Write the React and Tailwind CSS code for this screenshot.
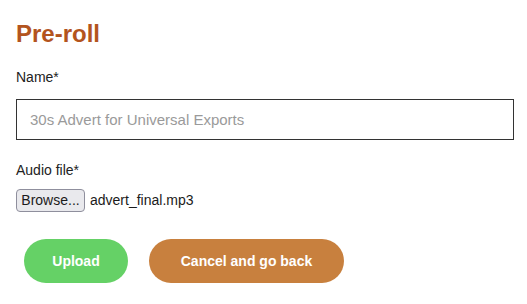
import React from "react";

export default function App() {
  return (
    <div className="w-[527px] h-[304px] bg-white px-4 font-[family-name:'Liberation_Sans',Arial,sans-serif] text-[#222] overflow-hidden">
      <h1 className="pt-5 text-[24px] leading-[28px] font-bold text-[#b3541e]">Pre-roll</h1>
      <label className="block mt-[21px] text-[14px] leading-4 text-[#222]">Name*</label>
      <input
        type="text"
        placeholder="30s Advert for Universal Exports"
        className="block mt-[14px] w-[498px] h-[41px] border border-[#333] pl-[13px] text-[15px] text-[#222] placeholder:text-[#9a9a9a] outline-none bg-white"
      />
      <label className="block mt-[22px] text-[14px] leading-4 text-[#222]">Audio file*</label>
      <div className="mt-[11px] flex items-center gap-[5px]">
        <span className="h-[23px] w-[69px] flex items-center justify-center rounded-[4px] border border-[#8f8f9d] bg-[#e9e9ed] text-[14px] text-[#1b1b1b]">
          Browse...
        </span>
        <span className="text-[14px] text-[#1b1b1b]">advert_final.mp3</span>
      </div>
      <div className="mt-[27px] ml-2 flex gap-[21px]">
        <button className="h-[44px] w-[104px] rounded-full bg-[#65d166] text-white text-[14px] font-bold">
          Upload
        </button>
        <button className="h-[44px] w-[195px] rounded-full bg-[#c8803e] text-white text-[14px] font-bold">
          Cancel and go back
        </button>
      </div>
    </div>
  );
}
